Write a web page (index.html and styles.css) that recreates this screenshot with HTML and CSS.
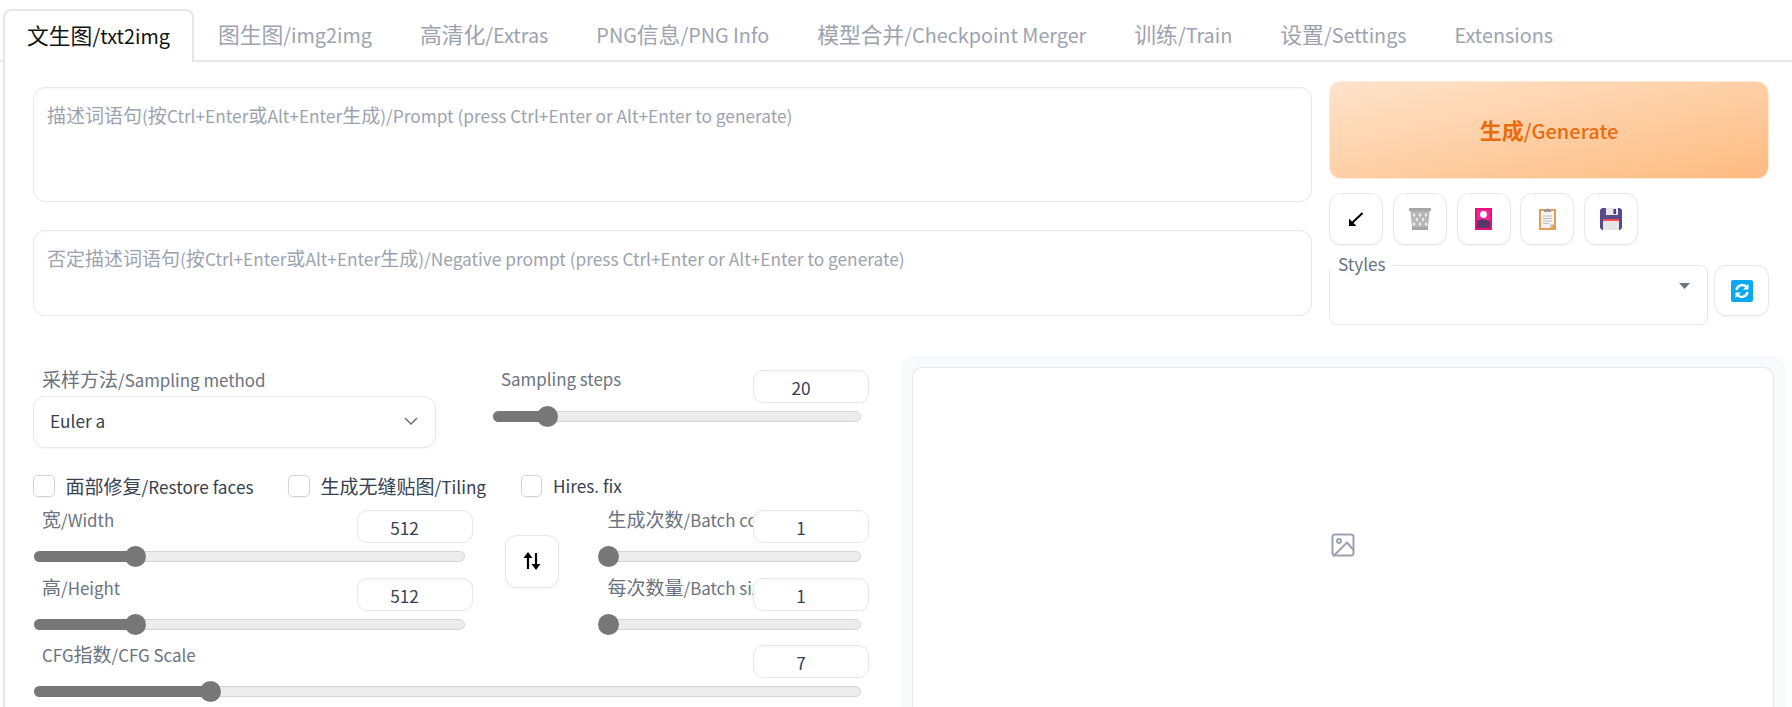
FILE: index.html
```html
<!DOCTYPE html>
<html lang="zh-CN">
<head>
  <meta charset="UTF-8" />
  <title>Stable Diffusion WebUI</title>
  <link rel="stylesheet" href="styles.css">
</head>
<body>

  <!-- Tabs -->
  <div class="tabs">
    <button class="tab active"><span class="zh">文生图</span>/txt2img</button>
    <button class="tab"><span class="zh">图生图</span>/img2img</button>
    <button class="tab"><span class="zh">高清化</span>/Extras</button>
    <button class="tab">PNG<span class="zh">信息</span>/PNG Info</button>
    <button class="tab"><span class="zh">模型合并</span>/Checkpoint Merger</button>
    <button class="tab"><span class="zh">训练</span>/Train</button>
    <button class="tab"><span class="zh">设置</span>/Settings</button>
    <button class="tab tab-last">Extensions</button>
  </div>

  <div class="panel">

    <!-- Prompts and generate -->
    <div class="top-row">
      <div class="prompts">
        <div class="prompt-box prompt-main"><span class="zh">描述词语句</span>(<span class="zh">按</span>Ctrl+Enter<span class="zh">或</span>Alt+Enter<span class="zh">生成</span>)/Prompt (press Ctrl+Enter or Alt+Enter to generate)</div>
        <div class="prompt-box prompt-neg"><span class="zh">否定描述词语句</span>(<span class="zh">按</span>Ctrl+Enter<span class="zh">或</span>Alt+Enter<span class="zh">生成</span>)/Negative prompt (press Ctrl+Enter or Alt+Enter to generate)</div>
      </div>
      <div class="actions">
        <button class="generate-btn"><span class="zh">生成</span>/Generate</button>
        <div class="tool-row">
          <button class="tool-btn">
            <svg width="14" height="14" viewBox="0 0 14 14"><path d="M13.500 1 3 11" stroke="#000" stroke-width="2" fill="none"/><path d="M0 14V6.500L7.500 14Z" fill="#000"/></svg>
          </button>
          <button class="tool-btn">
            <svg width="22" height="22" viewBox="0 0 22 22">
              <path d="M1.500 3h19L19 19H3Z" fill="#b4b4b4"/>
              <path d="M0 0h22v3H0zM3 19h16v3H3z" fill="#a6a6a6"/>
              <path d="M5 4.500l1.500 2.500L5 9.500 3.500 7zM11 4.500l1.500 2.500-1.500 2.500L9.500 7zM17 4.500l1.500 2.500-1.500 2.500L15.500 7zM8 9l1.500 2.500L8 14l-1.500-2.500zM14 9l1.500 2.500L14 14l-1.500-2.500zM5 13.500l1.500 2.500L5 18.500 3.500 16zM11 13.500l1.500 2.500-1.500 2.500L9.500 16zM17 13.500l1.500 2.500-1.500 2.500-1.500-2.500z" fill="#eaeaea"/>
            </svg>
          </button>
          <button class="tool-btn">
            <svg width="17" height="22" viewBox="0 0 17 22">
              <rect width="17" height="22" fill="#e6117f"/>
              <rect x="2" y="2" width="13" height="18" fill="#f0259a"/>
              <path d="M2 13l5-2 8 2v7H2z" fill="#573767"/>
              <circle cx="8.500" cy="6.500" r="3.400" fill="#fff"/>
            </svg>
          </button>
          <button class="tool-btn">
            <svg width="17" height="22" viewBox="0 0 17 22">
              <rect y="1" width="17" height="21" fill="#e39d52"/>
              <path d="M2 3h13v13l-4 4H2z" fill="#f4f4f4"/>
              <path d="M11 20v-4h4z" fill="#cfcfcf"/>
              <path d="M4 8h9M4 10.500h9M4 13h9M4 15.500h6" stroke="#bbb" stroke-width="1"/>
              <path d="M5 1.500h2.500L8.500 0l1 1.500H12V4H5z" fill="#9a9a9a"/>
            </svg>
          </button>
          <button class="tool-btn">
            <svg width="22" height="22" viewBox="0 0 22 22">
              <path d="M2 0h18l2 2v18l-2 2H2l-2-2V2z" fill="#5a4a8c"/>
              <rect x="6" y="0" width="12" height="7" fill="#e8e8e8"/>
              <rect x="13.500" y="1" width="2.500" height="5" fill="#4b3f78"/>
              <rect x="3" y="11" width="16" height="11" fill="#e6e6e6"/>
              <rect x="3" y="11" width="16" height="2" fill="#f2514f"/>
            </svg>
          </button>
        </div>
        <div class="styles-row">
          <div class="styles-box">
            <span class="styles-label">Styles</span>
            <svg class="styles-caret" width="11" height="6" viewBox="0 0 11 6"><path d="M0 0h11L5.500 6z" fill="#6b7280"/></svg>
          </div>
          <button class="tool-btn refresh-btn">
            <svg width="22" height="22" viewBox="0 0 22 22">
              <rect width="22" height="22" rx="2" fill="#0aa8ee"/>
              <path d="M5.500 10a5.800 5.800 0 0 1 10-3" stroke="#fff" stroke-width="2.400" fill="none"/>
              <path d="M17.500 4v5.500H12z" fill="#fff"/>
              <path d="M16.500 12a5.800 5.800 0 0 1-10 3" stroke="#fff" stroke-width="2.400" fill="none"/>
              <path d="M4.500 18v-5.500H10z" fill="#fff"/>
            </svg>
          </button>
        </div>
      </div>
    </div>

    <!-- Settings and preview -->
    <div class="bottom-row">
      <div class="settings">
        <div class="sampler-row">
          <div class="sampler">
            <div class="field-label"><span class="zh">采样方法</span>/Sampling method</div>
            <div class="select-box">
              <span>Euler a</span>
              <svg width="14" height="8" viewBox="0 0 14 8"><path d="M1 1l6 6 6-6" stroke="#6b7280" stroke-width="1.500" fill="none"/></svg>
            </div>
          </div>
          <div class="slider steps">
            <div class="slider-head"><span class="slider-label">Sampling steps</span><span class="num">20</span></div>
            <div class="track"><div class="fill" style="width: 54px"></div></div>
          </div>
        </div>

        <div class="check-row">
          <label class="check c1"><span class="box"></span><span><span class="zh">面部修复</span>/Restore faces</span></label>
          <label class="check c2"><span class="box"></span><span><span class="zh">生成无缝贴图</span>/Tiling</span></label>
          <label class="check"><span class="box"></span>Hires. fix</label>
        </div>

        <div class="size-row">
          <div class="size-col">
            <div class="slider">
              <div class="slider-head"><span class="slider-label"><span class="zh">宽</span>/Width</span><span class="num">512</span></div>
              <div class="track"><div class="fill" style="width: 101px"></div></div>
            </div>
            <div class="slider">
              <div class="slider-head"><span class="slider-label"><span class="zh">高</span>/Height</span><span class="num">512</span></div>
              <div class="track"><div class="fill" style="width: 101px"></div></div>
            </div>
          </div>
          <button class="tool-btn swap-btn">
            <svg width="18" height="18" viewBox="0 0 18 18">
              <path d="M5 17V3" stroke="#000" stroke-width="2.200" fill="none"/><path d="M5 0l4.500 6h-9z" fill="#000"/>
              <path d="M13 1v14" stroke="#000" stroke-width="2.200" fill="none"/><path d="M13 18l-4.500-6h9z" fill="#000"/>
            </svg>
          </button>
          <div class="batch-col">
            <div class="slider">
              <div class="slider-head"><span class="slider-label"><span class="zh">生成次数</span>/Batch count</span><span class="num">1</span></div>
              <div class="track"><div class="fill" style="width: 10px"></div></div>
            </div>
            <div class="slider">
              <div class="slider-head"><span class="slider-label"><span class="zh">每次数量</span>/Batch size</span><span class="num">1</span></div>
              <div class="track"><div class="fill" style="width: 10px"></div></div>
            </div>
          </div>
        </div>

        <div class="slider cfg">
          <div class="slider-head"><span class="slider-label">CFG<span class="zh">指数</span>/CFG Scale</span><span class="num">7</span></div>
          <div class="track"><div class="fill" style="width: 176px"></div></div>
        </div>
      </div>

      <div class="preview">
        <div class="preview-inner">
          <svg width="24" height="24" viewBox="0 0 24 24" fill="none" stroke="#9ca3af" stroke-width="2" stroke-linecap="round" stroke-linejoin="round">
            <rect x="1.500" y="1.500" width="21" height="21" rx="2.500"/>
            <circle cx="8" cy="8" r="2"/>
            <path d="M22.500 17 16 9.500 3 22.500"/>
          </svg>
        </div>
      </div>
    </div>
  </div>

</body>
</html>
```

FILE: styles.css
```css
* {
  box-sizing: border-box;
}
html, body {
  margin: 0;
  height: 707px;
  overflow: hidden;
}
body {
  background: #fff;
  font-family: "Noto Sans CJK SC", "Noto Sans", sans-serif;
  font-size: 17.200px;
  color: #374151;
}
button {
  font-family: inherit;
  background: #fff;
  padding: 0;
  cursor: pointer;
}
/* chinese glyphs sit larger than the latin next to them */
.zh {
  font-size: 19px;
}

/* tabs */
.tabs {
  display: flex;
  height: 62px;
  padding: 9px 0 0 3px;
  border-bottom: 2px solid #e5e7eb;
}
.tab {
  height: 51px;
  padding: 0 24px 2px;
  border: 0;
  font-size: 19.800px;
  color: #9ca3af;
  white-space: nowrap;
}
.tab .zh {
  font-size: 21.800px;
}
.tab.active {
  height: 53px;
  color: #111;
  border: 2px solid #e5e7eb;
  border-bottom: 0;
  border-radius: 8px 8px 0 0;
  padding: 0 22px 4px;
}
.tab-last {
  padding-bottom: 0;
}

.panel {
  height: 645px;
  margin-left: 3px;
  padding: 19px 23px 0 28px;
  border-left: 2px solid #e5e7eb;
}

/* prompts */
.top-row {
  display: flex;
  gap: 17.500px;
}
.prompts {
  flex: 1;
  padding-top: 6px;
}
.prompt-box {
  border: 1px solid #e5e7eb;
  border-radius: 12px;
  padding: 15px 13px;
  font-size: 17.300px;
  color: #9ca3af;
  line-height: 24px;
  white-space: nowrap;
  box-shadow: inset 0 1px 2px rgba(0, 0, 0, 0.03);
}
.prompt-main {
  height: 115px;
  margin-bottom: 28px;
}
.prompt-neg {
  height: 86px;
}

/* generate column */
.actions {
  width: 440px;
  flex: none;
}
.generate-btn {
  display: block;
  width: 100%;
  height: 98px;
  padding-bottom: 2px;
  border: 1px solid #fde8d3;
  border-radius: 12px;
  background: linear-gradient(to bottom right, #fee3cb, #fdbb80);
  color: #ea6c0a;
  font-size: 20px;
  font-weight: 500;
}
.generate-btn .zh {
  font-size: 22px;
  font-weight: 700;
}
.tool-row {
  display: flex;
  gap: 9.800px;
  margin-top: 14px;
}
.tool-btn {
  display: flex;
  align-items: center;
  justify-content: center;
  width: 54px;
  height: 52px;
  border: 1px solid #e5e7eb;
  border-radius: 12px;
  box-shadow: 0 1px 2px rgba(0, 0, 0, 0.05);
  flex: none;
}
.styles-row {
  display: flex;
  gap: 6.500px;
  margin-top: 20px;
}
.styles-box {
  position: relative;
  width: 378.500px;
  height: 60px;
  border: 1px solid #e5e7eb;
  border-radius: 8px;
}
.styles-label {
  position: absolute;
  top: -13px;
  left: 1px;
  padding: 0 7px;
  background: #fff;
  color: #6b7280;
  line-height: 22px;
}
.styles-caret {
  position: absolute;
  top: 17px;
  right: 17px;
}
.refresh-btn {
  width: 55px;
  height: 51px;
}

/* settings */
.bottom-row {
  display: flex;
  gap: 32px;
  margin-top: 31px;
}
.settings {
  width: 836px;
  flex: none;
}
.sampler-row {
  display: flex;
  gap: 56.500px;
}
.sampler {
  width: 402.500px;
  padding-top: 12px;
}
.field-label {
  padding-left: 9px;
  margin-bottom: 5px;
  font-size: 16.900px;
  color: #6b7280;
  line-height: 22px;
  white-space: nowrap;
}
.select-box {
  display: flex;
  align-items: center;
  justify-content: space-between;
  height: 52px;
  padding: 0 17px 3px 16px;
  border: 1px solid #e5e7eb;
  border-radius: 12px;
  box-shadow: 0 1px 2px rgba(0, 0, 0, 0.04);
}
.slider {
  margin-bottom: 15.500px;
}
.steps {
  flex: 1;
  margin: 14px 0 0;
}
.cfg {
  margin-bottom: 0;
}
.slider-head {
  display: flex;
  height: 33px;
}
.slider-label {
  flex: 1;
  min-width: 0;
  height: 32px;
  margin-top: -5px;
  padding-left: 9px;
  overflow: hidden;
  white-space: nowrap;
  font-size: 16.900px;
  color: #6b7280;
  line-height: 28px;
}
.num {
  flex: none;
  width: 116px;
  height: 33px;
  padding-right: 20px;
  border: 1px solid #e5e7eb;
  border-radius: 10px;
  background: #fff;
  text-align: center;
  line-height: 33px;
  box-shadow: inset 0 1px 2px rgba(0, 0, 0, 0.03);
}
.track {
  position: relative;
  height: 11px;
  margin: 8px 8px 0 1px;
  border: 1px solid #d4d4d4;
  border-radius: 6px;
  background: #ececec;
}
.fill {
  position: relative;
  height: 11px;
  margin: -1px 0 0 -1px;
  border-radius: 6px 0 0 6px;
  background: #777;
}
.fill::after {
  content: "";
  position: absolute;
  top: -5px;
  right: -10.500px;
  width: 21px;
  height: 21px;
  border-radius: 50%;
  background: #777;
}

/* checkboxes */
.check-row {
  display: flex;
  margin-top: 27px;
  height: 21.500px;
}
.check {
  display: flex;
  align-items: center;
  gap: 11px;
  white-space: nowrap;
}
.c1 {
  width: 255px;
}
.c2 {
  width: 232.500px;
}
.box {
  width: 21.500px;
  height: 21.500px;
  border: 1px solid #d1d5db;
  border-radius: 5px;
  box-shadow: 0 1px 2px rgba(0, 0, 0, 0.05);
}

/* size sliders */
.size-row {
  display: flex;
  margin-top: 13.500px;
}
.size-col {
  width: 439.500px;
  flex: none;
}
.swap-btn {
  height: 52.500px;
  margin: 25px 38.500px 0 32.500px;
}
.batch-col {
  flex: 1;
  min-width: 0;
}
.batch-col .slider-label {
  padding-left: 10px;
}

/* preview */
.preview {
  width: 884px;
  flex: none;
  height: 351px;
  padding: 11px 11px 0;
  background: #f9fafb;
  border-radius: 12px 12px 0 0;
}
.preview-inner {
  display: flex;
  justify-content: center;
  padding-top: 165px;
  height: 340px;
  background: #fff;
  border: 1px solid #e5e7eb;
  border-bottom: 0;
  border-radius: 10px 10px 0 0;
}
```
